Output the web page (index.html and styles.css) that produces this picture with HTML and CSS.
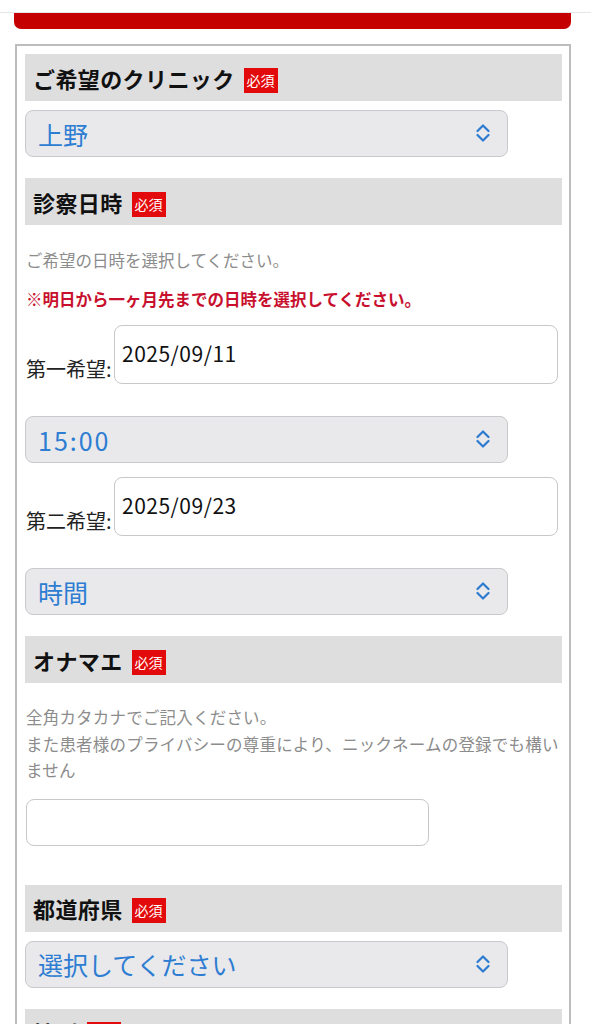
FILE: index.html
```html
<!DOCTYPE html>
<html lang="ja">
<head>
<meta charset="utf-8">
<title>予約フォーム</title>
<link rel="stylesheet" href="styles.css">
</head>
<body>
<div class="topline"></div>
<div class="redbar"></div>
<form class="form">
  <div class="head"><span class="head-title">ご希望のクリニック</span><span class="badge">必須</span></div>
  <div class="select-wrap sel-first">
    <select class="select"><option>上野</option></select>
    <svg class="chev" width="14" height="20" viewBox="0 0 14 20"><path d="M1.5 8 L7 2.5 L12.5 8 M1.5 12 L7 17.5 L12.5 12" fill="none" stroke="#2c7bd0" stroke-width="2.2" stroke-linecap="round" stroke-linejoin="round"/></svg>
  </div>

  <div class="head sec"><span class="head-title">診察日時</span><span class="badge">必須</span></div>
  <p class="note note-first">ご希望の日時を選択してください。</p>
  <p class="warn">※明日から一ヶ月先までの日時を選択してください。</p>
  <div class="date-row row1">
    <label class="date-label">第一希望:</label>
    <input class="date-input" type="text" value="2025/09/11">
  </div>
  <div class="select-wrap sel-time">
    <select class="select select-num"><option>15:00</option></select>
    <svg class="chev" width="14" height="20" viewBox="0 0 14 20"><path d="M1.5 8 L7 2.5 L12.5 8 M1.5 12 L7 17.5 L12.5 12" fill="none" stroke="#2c7bd0" stroke-width="2.2" stroke-linecap="round" stroke-linejoin="round"/></svg>
  </div>
  <div class="date-row row2">
    <label class="date-label">第二希望:</label>
    <input class="date-input" type="text" value="2025/09/23">
  </div>
  <div class="select-wrap sel-time2">
    <select class="select"><option>時間</option></select>
    <svg class="chev" width="14" height="20" viewBox="0 0 14 20"><path d="M1.5 8 L7 2.5 L12.5 8 M1.5 12 L7 17.5 L12.5 12" fill="none" stroke="#2c7bd0" stroke-width="2.2" stroke-linecap="round" stroke-linejoin="round"/></svg>
  </div>

  <div class="head sec"><span class="head-title">オナマエ</span><span class="badge">必須</span></div>
  <p class="note note-name">全角カタカナでご記入ください。<br>また患者様のプライバシーの尊重により、ニックネームの登録でも構いません</p>
  <input class="name-input" type="text">

  <div class="head sec-far"><span class="head-title">都道府県</span><span class="badge">必須</span></div>
  <div class="select-wrap sel-first">
    <select class="select"><option>選択してください</option></select>
    <svg class="chev" width="14" height="20" viewBox="0 0 14 20"><path d="M1.5 8 L7 2.5 L12.5 8 M1.5 12 L7 17.5 L12.5 12" fill="none" stroke="#2c7bd0" stroke-width="2.2" stroke-linecap="round" stroke-linejoin="round"/></svg>
  </div>

  <div class="head sec"><span class="head-title">性別</span><span class="badge">必須</span></div>
</form>
</body>
</html>
```
FILE: styles.css
```css
* { box-sizing: border-box; }
html, body {
  margin: 0;
  padding: 0;
  background: #fff;
  font-family: "Noto Sans CJK JP", "Noto Sans", sans-serif;
  color: #111;
  overflow: hidden;
}
.topline {
  height: 13px;
  border-bottom: 1px solid #e6e6e6;
}
.redbar {
  height: 16px;
  margin: 0 20px 0 14px;
  background: #c40000;
  border-radius: 0 0 7px 7px;
}
.form {
  margin: 15px 20px 0 15px;
  border: 2px solid #bdbdbd;
  border-bottom: none;
  padding: 8px 7px 0 8px;
  height: 1100px;
}
.head {
  height: 47px;
  background: #dedede;
  display: flex;
  align-items: center;
  padding-left: 8px;
}
.head-title {
  font-size: 22px;
  font-weight: 700;
  color: #111;
  letter-spacing: 0.4px;
}
.badge {
  margin-left: 9px;
  background: #e20a0a;
  color: #fff;
  font-size: 14px;
  line-height: 25px;
  height: 25px;
  padding: 0 3px;
  margin-top: 5px;
}
.sec { margin-top: 21px; }
.sec-far { margin-top: 39px; }
.select-wrap {
  position: relative;
  width: 483px;
}
.sel-first { margin-top: 9px; }
.sel-time { margin-top: 32px; }
.sel-time2 { margin-top: 32px; }
.select {
  display: block;
  width: 100%;
  height: 47px;
  -webkit-appearance: none;
  appearance: none;
  background: #e9e9ec;
  border: 1px solid #c9c9cd;
  border-radius: 8px;
  padding: 0 0 0 12px;
  font-family: "Noto Sans CJK JP", "Noto Sans", sans-serif;
  font-size: 25px;
  color: #2d7dd2;
  outline: none;
}
.select-num { letter-spacing: 2px; }
.chev {
  position: absolute;
  right: 18px;
  top: 13px;
}
.note {
  margin: 0;
  font-size: 16.5px;
  line-height: 26px;
  color: #8c8c8c;
  padding-left: 1px;
}
.note-first { margin-top: 22px; }
.note-name { margin-top: 21px; line-height: 26.5px; letter-spacing: 0.2px; }
.warn {
  margin: 13px 0 0;
  padding-left: 1px;
  font-size: 16.5px;
  line-height: 26px;
  font-weight: 700;
  color: #c8102e;
}
.date-row {
  display: flex;
  align-items: flex-end;
  padding-left: 1px;
  margin-right: 4px;
}
.row1 { margin-top: 13px; }
.row2 { margin-top: 14px; }
.date-label {
  width: 88px;
  font-size: 20px;
  line-height: 24px;
  padding-bottom: 3px;
  color: #222;
  white-space: nowrap;
}
.date-input {
  flex: 1;
  height: 59px;
  border: 1px solid #c8c8c8;
  border-radius: 8px;
  padding: 0 0 4px 7px;
  font-family: "Noto Sans CJK JP", "Noto Sans", sans-serif;
  font-size: 21px;
  letter-spacing: 0.5px;
  color: #111;
  background: #fff;
  outline: none;
}
.name-input {
  display: block;
  margin: 15px 0 0 1px;
  width: 403px;
  height: 47px;
  border: 1px solid #c8c8c8;
  border-radius: 8px;
  background: #fff;
  outline: none;
}
```
